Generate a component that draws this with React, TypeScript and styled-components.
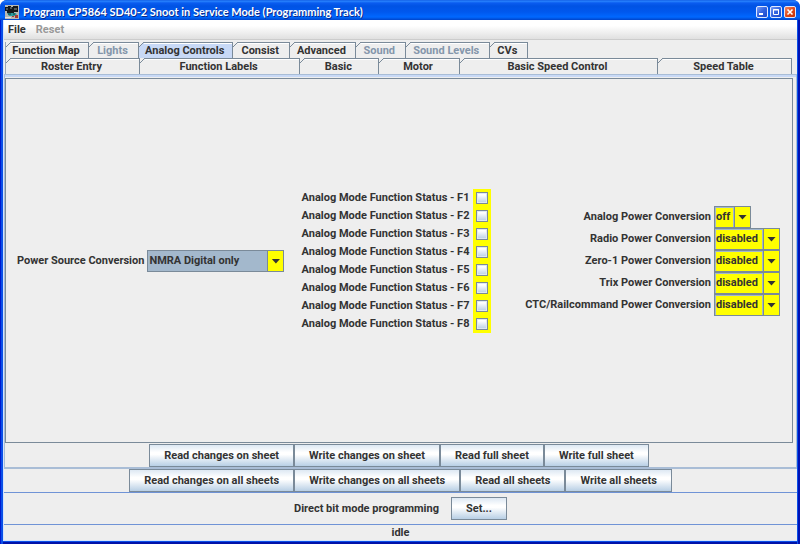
import React from 'react';
import styled, { createGlobalStyle } from 'styled-components';

const GlobalStyle = createGlobalStyle`
  *, *::before, *::after { box-sizing: border-box; }
  body { margin: 0; background: #fff; }
  body, button, select, input {
    font-family: Roboto, "Liberation Sans", Arial, sans-serif;
    font-size: 11px;
    font-weight: bold;
    line-height: 14px;
    color: #333;
  }
`;

const Window = styled.div`
  display: flex;
  flex-direction: column;
  min-height: 100vh;
  border-radius: 7px 7px 0 0;
  overflow: hidden;
  background: #0a3fdc;
`;

const TitleBar = styled.header`
  display: flex;
  align-items: center;
  gap: 4px;
  height: 20px;
  padding: 3px 4px 0 5px;
  background: linear-gradient(#0a52dd 0, #2a86ff 1px, #0a5cf0 3px, #0053e4 6px, #0058ee 12px, #0068ff 17px, #0050dc 19px, #0043c8 20px);
`;

const Title = styled.h1`
  flex: 1;
  margin: 0;
  font-family: Lato, "Noto Sans", sans-serif;
  font-size: 11px;
  line-height: 14px;
  font-weight: bold;
  color: #fff;
  text-shadow: 1px 1px #0a2a8c;
  white-space: nowrap;
`;

const Controls = styled.div`
  display: flex;
  gap: 2px;
`;

const ControlButton = styled.button<{ $close?: boolean }>`
  display: grid;
  place-items: center;
  width: 12px;
  height: 12px;
  padding: 0;
  border: 1px solid #dfe8ff;
  border-radius: 2px;
  background: ${p => (p.$close ? 'linear-gradient(135deg, #f08a68, #e04a1c 50%, #c03008)' : 'linear-gradient(135deg, #7a9cf4, #3263e0 50%, #1c48c8)')};
`;

const Frame = styled.div`
  flex: 1;
  display: flex;
  flex-direction: column;
  padding: 0 3px 3px;
  background: linear-gradient(90deg, #0019cf 0 1px, #0a4fe8 1px 3px, transparent 3px calc(100% - 3px), #0a4fe8 calc(100% - 3px) calc(100% - 2px), #0012b4 calc(100% - 2px)),
    linear-gradient(#0a4fe8 calc(100% - 2px), #0012a8 calc(100% - 2px));
`;

const Client = styled.div`
  flex: 1;
  display: flex;
  flex-direction: column;
  border: solid #d4e4fb;
  border-width: 0 0 1px 1px;
  background: #eee;
`;

const MenuBar = styled.nav`
  display: flex;
  gap: 10px;
  height: 20px;
  padding: 2px 4px;
  border-bottom: 1px solid #ccc;
  background: linear-gradient(#fff 30%, #e0e0e0);
`;

const MenuButton = styled.button`
  padding: 0;
  border: 0;
  background: none;
  &:disabled { color: #999; }
`;

const Tabs = styled.div`
  padding: 2px 5px 0 1px;
`;

const TabRow = styled.div<{ $fill?: boolean }>`
  display: flex;
  height: 16px;
  margin-right: ${p => (p.$fill ? '0' : '264px')};
`;

const Tab = styled.button<{ $size: number; $active?: boolean }>`
  flex: ${p => p.$size} 1 0;
  padding: 1px 2px 0 0;
  border: 0;
  border-right: 1px solid #7a8a99;
  white-space: nowrap;
  background:
    linear-gradient(#7a8a99, #7a8a99) 5px 0 / 100% 1px no-repeat,
    linear-gradient(135deg, #eee 3px, #7a8a99 3px 4px, transparent 4px) 0 0 / 6px 6px no-repeat,
    linear-gradient(#fff, #fff) 5px 1px / 100% 1px no-repeat;
  background-color: ${p => (p.$active ? '#c8d9f6' : '#eee')};
  &:first-child { border-left: 1px solid #9aa8b8; }
  &:disabled { color: #8496ab; }
`;

const Sheet = styled.main`
  flex: 1;
  display: flex;
  flex-direction: column;
  padding: 3px 3px 0 0;
  border: 1px solid #a9bdd6;
  border-width: 1px 1px 2px 1px;
  background: linear-gradient(#c8d9f6, #c8d9f6) 0 0 / 100% 2px no-repeat;
`;

const Panel = styled.section`
  flex: 1;
  display: grid;
  grid-template-columns: 289fr 202fr 294fr;
  align-items: center;
  justify-items: center;
  margin-bottom: 1px;
  border: 1px solid #7a8a99;
`;

const Field = styled.div`
  display: flex;
  align-items: center;
  gap: 3px;
`;

const Switches = styled.div`
  display: flex;
  flex-direction: column;
`;

const SwitchRow = styled.label`
  display: flex;
  align-items: center;
  justify-content: flex-end;
  gap: 4px;
  white-space: nowrap;
`;

const CheckCell = styled.span`
  display: grid;
  place-items: center;
  width: 18px;
  height: 18px;
  background: #ff0;
`;

const Check = styled.input`
  appearance: none;
  width: 12px;
  height: 12px;
  margin: 0;
  border: 1px solid #7a8a99;
  background: linear-gradient(#fff 20%, #b8cfe5);
  box-shadow: inset 0 0 0 1px #dfe8f2;
  &:checked { background: #4a6a8a; }
`;

const Conversions = styled.div`
  display: grid;
  grid-template-columns: auto 66px;
  column-gap: 3px;
  align-items: center;
  justify-self: end;
  margin-right: 12px;
`;

const ConversionLabel = styled.label`
  text-align: right;
  white-space: nowrap;
`;

const SelectBox = styled.span<{ $width: number }>`
  position: relative;
  display: flex;
  justify-self: start;
  width: ${p => p.$width}px;
  &::after {
    content: '';
    position: absolute;
    right: 4px;
    top: 9px;
    width: 9px;
    height: 5px;
    clip-path: polygon(0 0, 100% 0, 50% 100%);
    background: #333;
    pointer-events: none;
  }
`;

const Select = styled.select<{ $tone: string }>`
  appearance: none;
  flex: 1;
  min-width: 0;
  height: 22px;
  padding: 0 18px 0 1px;
  border: 1px solid #7a8a99;
  border-radius: 0;
  background:
    linear-gradient(#7a8a99, #7a8a99) right 15px top 0 / 1px 100% no-repeat,
    linear-gradient(#ff0, #ff0) right top / 15px 100% no-repeat,
    linear-gradient(#a3b8cc, #a3b8cc) right 16px top 0 / 1px 100% no-repeat,
    linear-gradient(#a3b8cc, #a3b8cc) 0 0 / 100% 1px no-repeat,
    linear-gradient(#a3b8cc, #a3b8cc) 0 0 / 1px 100% no-repeat,
    ${p => p.$tone};
`;

const ButtonRow = styled.div`
  display: flex;
  justify-content: center;
`;

const Button = styled.button`
  height: 23px;
  padding: 0 14px;
  border: 1px solid #7a8a99;
  white-space: nowrap;
  background: linear-gradient(#dde8f3, #fff 35%, #fff 45%, #b8cfe5);
`;

const ModeRow = styled.div`
  display: flex;
  align-items: center;
  justify-content: center;
  gap: 12px;
  height: 33px;
  border: solid #6f93d6;
  border-width: 1px 0;
`;

const Status = styled.footer`
  height: 15px;
  line-height: 16px;
  text-align: center;
`;

const topTabs = [
  { name: 'Function Map', size: 84 },
  { name: 'Lights', size: 49, disabled: true },
  { name: 'Analog Controls', size: 96, active: true },
  { name: 'Consist', size: 56 },
  { name: 'Advanced', size: 66 },
  { name: 'Sound', size: 49, disabled: true },
  { name: 'Sound Levels', size: 85, disabled: true },
  { name: 'CVs', size: 37 },
];

const bottomTabs = [
  { name: 'Roster Entry', size: 134 },
  { name: 'Function Labels', size: 161 },
  { name: 'Basic', size: 78 },
  { name: 'Motor', size: 79 },
  { name: 'Basic Speed Control', size: 200 },
  { name: 'Speed Table', size: 134 },
];

const conversions = [
  { name: 'Analog', value: 'off', width: 37 },
  { name: 'Radio', value: 'disabled', width: 66 },
  { name: 'Zero-1', value: 'disabled', width: 66 },
  { name: 'Trix', value: 'disabled', width: 66 },
  { name: 'CTC/Railcommand', value: 'disabled', width: 66 },
];

const TrainIcon = () => (
  <svg width="14" height="14" viewBox="0 0 14 14" aria-hidden="true">
    <rect width="14" height="14" fill="#b9b9b4" />
    <path d="M0 2h3V1h3v1h2V1h5v6H9v1H2V6H0z" fill="#15191c" />
    <path d="M1 4h2M5 3h2M9 4h3" stroke="#8a9696" />
    <path d="M2 8h9l1 3H4z" fill="#2c9c9c" />
    <path d="M3 9h3M8 9h2" stroke="#0d3c40" />
    <path d="M7 11h2v1H7zM10 10h3v3h-3z" fill="#a83a34" />
    <path d="M0 12h6v1H0z" fill="#e2e2de" />
  </svg>
);

export default function App() {
  return (
    <>
      <GlobalStyle />
      <Window>
        <TitleBar>
          <TrainIcon />
          <Title>Program CP5864 SD40-2 Snoot in Service Mode (Programming Track)</Title>
          <Controls>
            <ControlButton aria-label="Minimize">
              <svg width="10" height="10"><path d="M2 7h4" stroke="#fff" strokeWidth="2" /></svg>
            </ControlButton>
            <ControlButton aria-label="Maximize">
              <svg width="10" height="10"><path d="M2.5 2.5h5v5h-5zM2 3h6" fill="none" stroke="#fff" /></svg>
            </ControlButton>
            <ControlButton aria-label="Close" $close>
              <svg width="10" height="10"><path d="M2.5 2.5l5 5M7.5 2.5l-5 5" stroke="#fff" strokeWidth="1.6" /></svg>
            </ControlButton>
          </Controls>
        </TitleBar>
        <Frame>
          <Client>
            <MenuBar>
              <MenuButton>File</MenuButton>
              <MenuButton disabled>Reset</MenuButton>
            </MenuBar>
            <Tabs role="tablist">
              <TabRow>
                {topTabs.map(t => (
                  <Tab key={t.name} role="tab" $size={t.size} $active={t.active} aria-selected={!!t.active} disabled={t.disabled}>{t.name}</Tab>
                ))}
              </TabRow>
              <TabRow $fill>
                {bottomTabs.map(t => (
                  <Tab key={t.name} role="tab" $size={t.size} aria-selected={false}>{t.name}</Tab>
                ))}
              </TabRow>
            </Tabs>
            <Sheet>
              <Panel>
                <Field>
                  <label htmlFor="source">Power Source Conversion</label>
                  <SelectBox $width={137}>
                    <Select id="source" $tone="#a3b8cc"><option>NMRA Digital only</option></Select>
                  </SelectBox>
                </Field>
                <Switches>
                  {[1, 2, 3, 4, 5, 6, 7, 8].map(n => (
                    <SwitchRow key={n}>
                      Analog Mode Function Status - F{n}
                      <CheckCell><Check type="checkbox" /></CheckCell>
                    </SwitchRow>
                  ))}
                </Switches>
                <Conversions>
                  {conversions.map(c => (
                    <React.Fragment key={c.name}>
                      <ConversionLabel htmlFor={c.name}>{c.name} Power Conversion</ConversionLabel>
                      <SelectBox $width={c.width}>
                        <Select id={c.name} $tone="#ff0"><option>{c.value}</option></Select>
                      </SelectBox>
                    </React.Fragment>
                  ))}
                </Conversions>
              </Panel>
              <ButtonRow>
                <Button>Read changes on sheet</Button>
                <Button>Write changes on sheet</Button>
                <Button>Read full sheet</Button>
                <Button>Write full sheet</Button>
              </ButtonRow>
            </Sheet>
            <ButtonRow>
              <Button>Read changes on all sheets</Button>
              <Button>Write changes on all sheets</Button>
              <Button>Read all sheets</Button>
              <Button>Write all sheets</Button>
            </ButtonRow>
            <ModeRow>
              Direct bit mode programming
              <Button>Set...</Button>
            </ModeRow>
            <Status>idle</Status>
          </Client>
        </Frame>
      </Window>
    </>
  );
}
